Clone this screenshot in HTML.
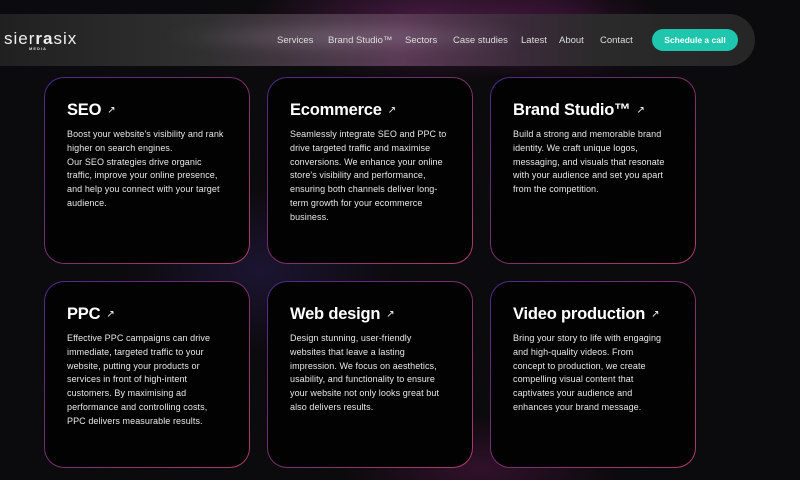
<!DOCTYPE html>
<html><head><style>
*{margin:0;padding:0;box-sizing:border-box}
body{width:800px;height:480px;overflow:hidden;background:#0b0a0c;font-family:"Liberation Sans",sans-serif;color:#fff;position:relative}
.bg{position:absolute;inset:0;background:
radial-gradient(ellipse 260px 90px at 430px 20px,rgba(120,40,110,.55),transparent 70%),
radial-gradient(ellipse 200px 120px at 260px 270px,rgba(60,40,120,.35),transparent 70%),
radial-gradient(ellipse 200px 80px at 480px 470px,rgba(120,30,100,.35),transparent 70%),
radial-gradient(ellipse 150px 80px at 560px 30px,rgba(90,20,80,.5),transparent 70%)}
.nav{position:absolute;left:-30px;top:14px;width:785px;height:52px;border-radius:26px;background:linear-gradient(90deg,#1e1e1e,#303030 30%,#4a3a48 45%,#5a3a55 55%,#3b2b3a 70%,#2a2a2a 80%,#262626);}
.blur{position:absolute;left:160px;top:22px;width:380px;height:30px;border-radius:15px;background:radial-gradient(ellipse at center,rgba(170,150,170,.4),transparent 70%);filter:blur(6px)}
.logo{position:absolute;left:4px;top:29px;font-size:17px;letter-spacing:1px;color:#eee}
.logo b{font-weight:bold}
.media{position:absolute;left:29px;top:46px;font-size:4px;letter-spacing:1px;font-weight:bold;color:#ddd}
.links{position:absolute;top:35px;font-size:9.5px;color:#ddd}
.links span{position:absolute;white-space:nowrap}
.btn{position:absolute;left:652px;top:29px;width:86px;height:22px;border-radius:11px;background:#1ec6ad;font-size:8.5px;font-weight:bold;text-align:center;line-height:22px;color:#fff}
.card{position:absolute;width:206px;height:187px;border-radius:20px;padding:1px;background:linear-gradient(135deg,#4a2a8a,#7a2f6a 50%,#b03a6a)}
.card .in{width:100%;height:100%;border-radius:19px;background:#020203;padding:23px 0 0 22px}
h2{font-size:16.5px;font-weight:bold;letter-spacing:-.2px;margin-bottom:8px}
h2 i{font-style:normal;font-weight:normal;font-size:10px;margin-left:6px;vertical-align:2px}
p{font-size:9px;line-height:13.8px;color:#e8e8e8;white-space:nowrap;letter-spacing:.08px}
</style></head><body>
<div class="bg"></div>
<div class="nav"></div><div class="blur"></div>
<div class="logo">sier<b>ra</b>six</div><div class="media">MEDIA</div>
<div class="links">
<span style="left:277px">Services</span><span style="left:328px">Brand Studio™</span><span style="left:405px">Sectors</span><span style="left:453px">Case studies</span><span style="left:521px">Latest</span><span style="left:559px">About</span><span style="left:600px">Contact</span></div>
<div class="btn">Schedule a call</div>

<div class="card" style="left:44px;top:77px"><div class="in"><h2>SEO<i>↗</i></h2><p>Boost your website's visibility and rank<br>higher on search engines.<br>Our SEO strategies drive organic<br>traffic, improve your online presence,<br>and help you connect with your target<br>audience.</p></div></div>
<div class="card" style="left:267px;top:77px"><div class="in"><h2>Ecommerce<i>↗</i></h2><p>Seamlessly integrate SEO and PPC to<br>drive targeted traffic and maximise<br>conversions. We enhance your online<br>store's visibility and performance,<br>ensuring both channels deliver long-<br>term growth for your ecommerce<br>business.</p></div></div>
<div class="card" style="left:490px;top:77px"><div class="in"><h2>Brand Studio™<i>↗</i></h2><p>Build a strong and memorable brand<br>identity. We craft unique logos,<br>messaging, and visuals that resonate<br>with your audience and set you apart<br>from the competition.</p></div></div>
<div class="card" style="left:44px;top:281px"><div class="in"><h2>PPC<i>↗</i></h2><p>Effective PPC campaigns can drive<br>immediate, targeted traffic to your<br>website, putting your products or<br>services in front of high-intent<br>customers. By maximising ad<br>performance and controlling costs,<br>PPC delivers measurable results.</p></div></div>
<div class="card" style="left:267px;top:281px"><div class="in"><h2>Web design<i>↗</i></h2><p>Design stunning, user-friendly<br>websites that leave a lasting<br>impression. We focus on aesthetics,<br>usability, and functionality to ensure<br>your website not only looks great but<br>also delivers results.</p></div></div>
<div class="card" style="left:490px;top:281px"><div class="in"><h2>Video production<i>↗</i></h2><p>Bring your story to life with engaging<br>and high-quality videos. From<br>concept to production, we create<br>compelling visual content that<br>captivates your audience and<br>enhances your brand message.</p></div></div>
</body></html>
